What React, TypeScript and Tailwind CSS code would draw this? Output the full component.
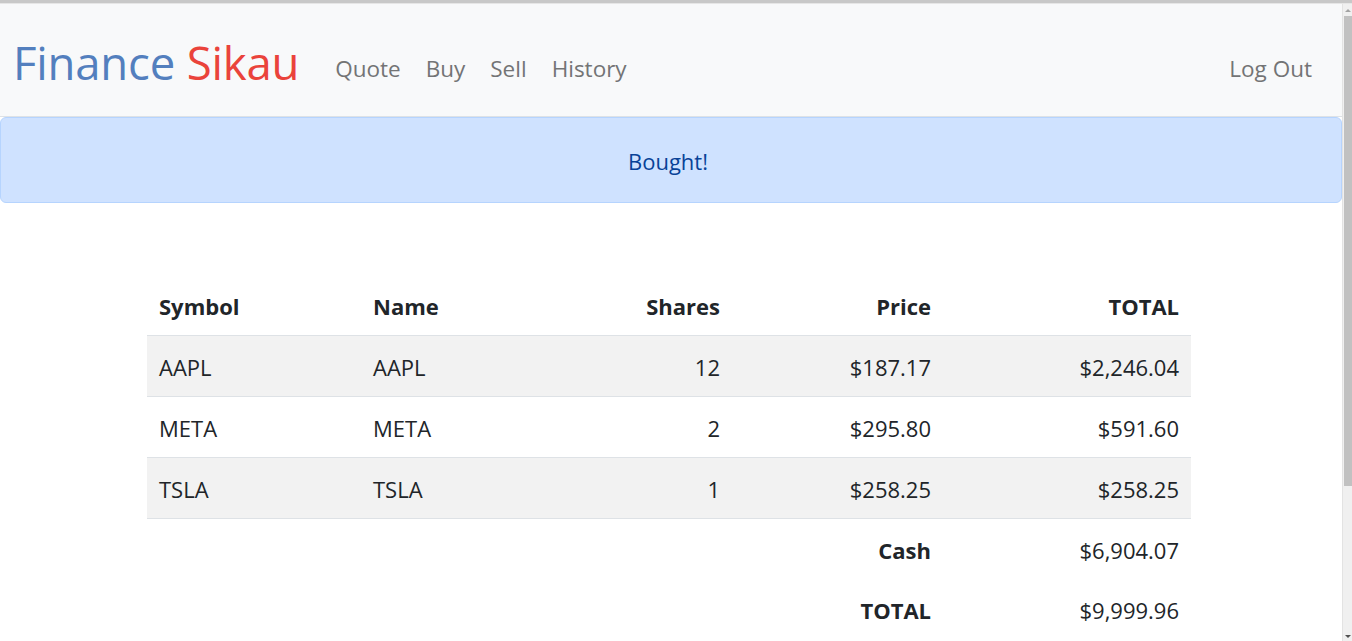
// App.tsx
const rows = [
  { symbol: 'AAPL', name: 'AAPL', shares: 12, price: '$187.17', total: '$2,246.04' },
  { symbol: 'META', name: 'META', shares: 2, price: '$295.80', total: '$591.60' },
  { symbol: 'TSLA', name: 'TSLA', shares: 1, price: '$258.25', total: '$258.25' },
];

const links = ['Quote', 'Buy', 'Sell', 'History'];

const cell = 'px-[12px] pt-[16px] pb-[14px]';

const App = () => {
  return (
    <div className="h-[641px] overflow-hidden bg-white text-[#212529] font-['Open_Sans',sans-serif]">
      <div className="h-[3px] bg-[#c8c8c8]" />
      <div className="h-[1px] bg-[#e6e6e6]" />
      <div className="flex h-[637px]">
        <div className="flex-1 flex flex-col">
          <nav className="h-[113px] shrink-0 flex items-center bg-[#f8f9fa] border-b border-[#dee2e6] pl-[13px] pr-[30px]">
            <a className="text-[45.5px] leading-none tracking-[-0.2px] mr-[36px] mt-[6px]">
              <span className="text-[#537fbe]">Finance</span>{' '}
              <span className="text-[#ea433b]">Sikau</span>
            </a>
            <ul className="flex gap-[25px] text-[22.5px] text-[#737475] mt-[18px]">
              {links.map((l) => (
                <li key={l}>{l}</li>
              ))}
            </ul>
            <div className="ml-auto text-[22.5px] text-[#737475] mt-[18px]">Log Out</div>
          </nav>
          <div className="h-[86px] shrink-0 flex items-center justify-center bg-[#cfe2ff] border border-[#b6d4fe] rounded-[6px] text-[#084298] text-[22px] pt-[2px] pr-[6px]">
            Bought!
          </div>
          <div className="pt-[72px] pl-[147px]">
            <table className="w-[1044px] table-fixed border-collapse text-[22px] leading-[30px]">
              <colgroup>
                <col className="w-[214px]" />
                <col className="w-[185px]" />
                <col className="w-[186px]" />
                <col className="w-[211px]" />
                <col className="w-[248px]" />
              </colgroup>
              <thead>
                <tr className="border-b border-[#dee2e6] font-bold">
                  <th className={`${cell} text-left`}>Symbol</th>
                  <th className={`${cell} text-left`}>Name</th>
                  <th className={`${cell} text-right`}>Shares</th>
                  <th className={`${cell} text-right`}>Price</th>
                  <th className={`${cell} text-right`}>TOTAL</th>
                </tr>
              </thead>
              <tbody>
                {rows.map((r, i) => (
                  <tr key={r.symbol} className={`border-b border-[#dee2e6] ${i % 2 === 0 ? 'bg-[#f2f2f2]' : ''}`}>
                    <td className={cell}>{r.symbol}</td>
                    <td className={cell}>{r.name}</td>
                    <td className={`${cell} text-right`}>{r.shares}</td>
                    <td className={`${cell} text-right`}>{r.price}</td>
                    <td className={`${cell} text-right`}>{r.total}</td>
                  </tr>
                ))}
              </tbody>
              <tfoot>
                <tr>
                  <td className={cell} colSpan={3} />
                  <td className={`${cell} text-right font-bold`}>Cash</td>
                  <td className={`${cell} text-right`}>$6,904.07</td>
                </tr>
                <tr>
                  <td className={cell} colSpan={3} />
                  <td className={`${cell} text-right font-bold`}>TOTAL</td>
                  <td className={`${cell} text-right`}>$9,999.96</td>
                </tr>
              </tfoot>
            </table>
          </div>
        </div>
        <div className="w-[10px] shrink-0 flex flex-col bg-[#f0f0f0] border-l border-[#e3e3e3]">
          <div className="h-[12px] flex items-center justify-center">
            <div className="w-0 h-0 border-l-[3px] border-r-[3px] border-b-[3px] border-l-transparent border-r-transparent border-b-[#a3a3a3]" />
          </div>
          <div className="ml-[1px] h-[470px] bg-[#c1c1c1]" />
          <div className="flex-1" />
          <div className="h-[10px] flex items-center justify-center">
            <div className="w-0 h-0 border-l-[3px] border-r-[3px] border-t-[3px] border-l-transparent border-r-transparent border-t-[#505050]" />
          </div>
        </div>
      </div>
    </div>
  );
};

export default App;
